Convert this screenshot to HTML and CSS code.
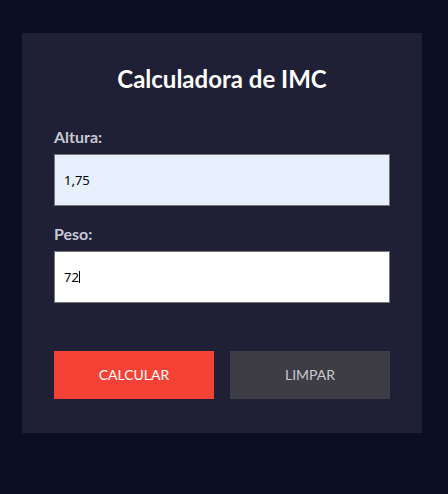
FILE: index.html
```html
<!DOCTYPE html>
<html lang="pt-BR">
<head>
<meta charset="utf-8">
<title>Calculadora de IMC</title>
<link rel="stylesheet" href="styles.css">
</head>
<body>
<div class="card">
  <h2 class="title">Calculadora de IMC</h2>
  <form class="form">
    <div class="field">
      <label class="label" for="altura">Altura:</label>
      <input class="input input-filled" id="altura" type="text" value="1,75">
    </div>
    <div class="field">
      <label class="label" for="peso">Peso:</label>
      <div class="input-wrap">
        <input class="input" id="peso" type="text" value="72">
        <span class="caret"></span>
      </div>
    </div>
    <div class="actions">
      <button type="button" class="btn btn-primary">CALCULAR</button>
      <button type="button" class="btn btn-secondary">LIMPAR</button>
    </div>
  </form>
</div>
</body>
</html>
```

FILE: styles.css
```css
html, body {
  margin: 0;
  padding: 0;
}
body {
  background: #0b0f22;
  font-family: Lato, "Open Sans", sans-serif;
  min-height: 494px;
  padding-top: 33px;
  box-sizing: border-box;
}
.card {
  width: 400px;
  margin-left: 22px;
  box-sizing: border-box;
  background: #1f1f35;
  padding: 32px 32px 34px;
}
.title {
  margin: 0 0 33px;
  font-size: 24px;
  font-weight: 700;
  line-height: 28.8px;
  color: #ffffff;
  text-align: center;
}
.form {
  display: flex;
  flex-direction: column;
}
.field {
  display: flex;
  flex-direction: column;
  margin-bottom: 18px;
}
.label {
  font-size: 16px;
  font-weight: 700;
  line-height: 19px;
  color: #c6c8d4;
  margin-bottom: 8px;
}
.input-wrap {
  position: relative;
  display: flex;
  flex-direction: column;
}
.input {
  height: 52px;
  box-sizing: border-box;
  border: 1px solid #767676;
  border-radius: 0;
  background: #ffffff;
  padding: 0 9px;
  font-family: "Noto Sans", "Open Sans", sans-serif;
  font-size: 13px;
  color: #000000;
  outline: none;
}
.input-filled {
  background: #e8f0fe;
}
.caret {
  position: absolute;
  left: 25px;
  top: 20px;
  width: 1px;
  height: 12px;
  background: #000000;
}
.actions {
  display: flex;
  gap: 16px;
  margin-top: 30px;
}
.btn {
  flex: 1;
  height: 48px;
  border: none;
  border-radius: 0;
  font-family: Lato, sans-serif;
  font-size: 14px;
  cursor: pointer;
}
.btn-primary {
  background: #f44336;
  color: #ffffff;
}
.btn-secondary {
  background: #3e3d45;
  color: #c9c9cc;
}
```
